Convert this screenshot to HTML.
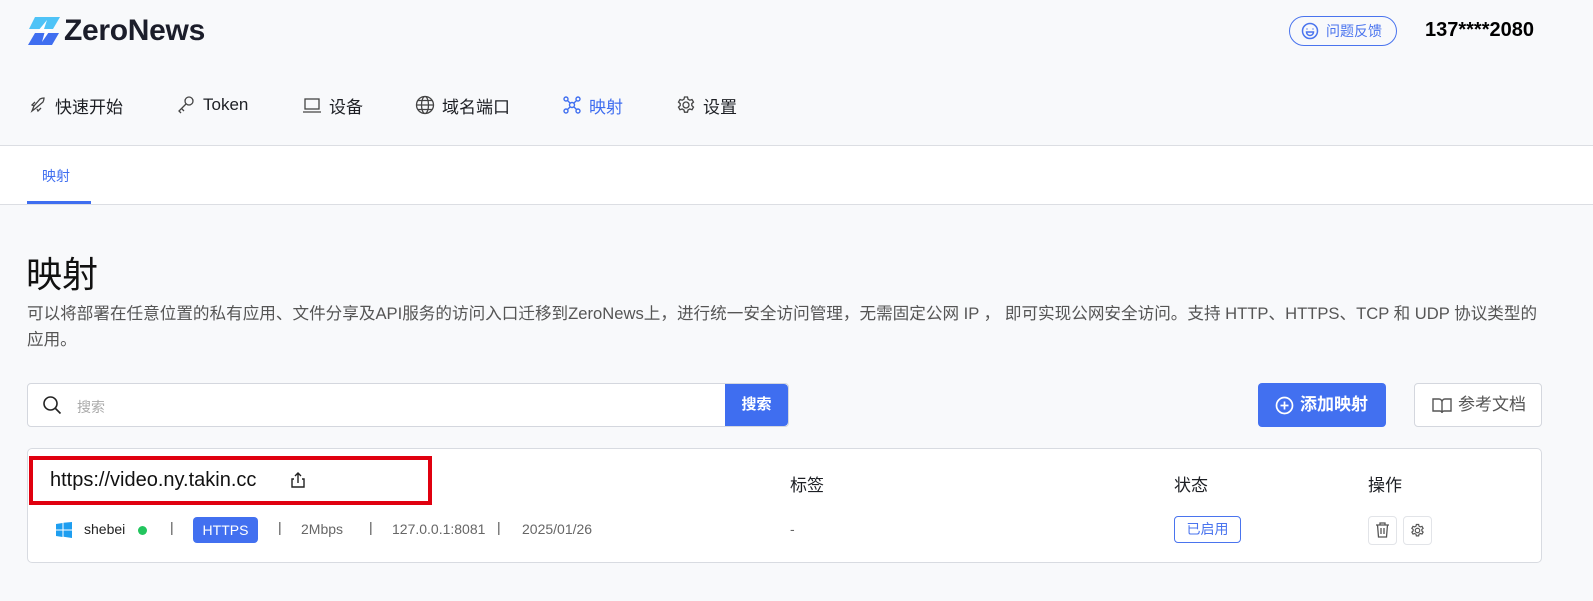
<!DOCTYPE html>
<html><head><meta charset="utf-8"><style>
*{box-sizing:border-box;margin:0;padding:0}
body{width:1593px;height:601px;background:#f8f9fb;font-family:"Liberation Sans","Noto Sans CJK SC",sans-serif;color:#1d1f24;position:relative;overflow:hidden}
.abs{position:absolute}
.nav{font-size:17px;display:flex;align-items:center;gap:7px;top:92px;height:26px}
.nav svg{width:20px;height:20px}
</style></head><body>
<div class="abs" style="left:0;top:0;width:1593px;height:146px;border-bottom:1px solid #dcdee3"></div>
<svg class="abs" style="left:26px;top:17px" width="36" height="28" viewBox="0 0 36 28"><path d="M9 0h25l-7 12H3z" fill="#4fc3f7"/><path d="M9 16h24l-7 12H2z" fill="#3f6ef0"/><path d="M21 3l-9 11h7l-3 11 9-13h-7z" fill="#fff"/></svg>
<div class="abs" style="left:64px;top:14px;font-size:30px;font-weight:bold;color:#1b1d2a;letter-spacing:-0.3px">ZeroNews</div>
<div class="abs" style="left:1289px;top:16px;width:108px;height:30px;border:1px solid #4a74ee;border-radius:15px;color:#4a74ee;font-size:14px;line-height:28px;padding-left:36px">问题反馈
<svg class="abs" style="left:11px;top:5px" width="18" height="18" viewBox="0 0 18 18" fill="none" stroke="#4a74ee" stroke-width="1.5"><circle cx="9" cy="9" r="7.5"/><path d="M6 6.5v1M12 6.5v1" /><path d="M5.5 10h7a3.5 3.5 0 0 1-7 0z"/></svg></div>
<div class="abs" style="left:1425px;top:19px;font-size:20px;font-weight:bold;color:#000">137****2080</div>

<div class="abs nav" style="left:28px"><svg viewBox="0 0 20 20" fill="none" stroke="#444" stroke-width="1.3"><path d="M4 16l2-5 6-7c2-1 4-1 4-1s0 2-1 4l-7 6zM6 11l-2-1 3-3M9 14l1 2 3-3M4 16l2-2"/></svg>快速开始</div>
<div class="abs nav" style="left:176px"><svg viewBox="0 0 20 20" fill="none" stroke="#444" stroke-width="1.3"><circle cx="13" cy="6" r="4"/><path d="M10 9l-7 7 2 2M6 14l2 2"/></svg>Token</div>
<div class="abs nav" style="left:302px"><svg viewBox="0 0 20 20" fill="none" stroke="#444" stroke-width="1.3"><rect x="3" y="4" width="14" height="10"/><path d="M1 17h18"/></svg>设备</div>
<div class="abs nav" style="left:415px"><svg viewBox="0 0 20 20" fill="none" stroke="#444" stroke-width="1.3"><circle cx="10" cy="10" r="8.5"/><ellipse cx="10" cy="10" rx="3.5" ry="8.5"/><path d="M1.5 10h17M3 5.5h14M3 14.5h14"/></svg>域名端口</div>
<div class="abs nav" style="left:562px;color:#3f6ef0"><svg viewBox="0 0 20 20" fill="none" stroke="#3f6ef0" stroke-width="1.4"><circle cx="10" cy="10" r="2.5"/><circle cx="4" cy="4" r="2"/><circle cx="16" cy="4" r="2"/><circle cx="4" cy="16" r="2"/><circle cx="16" cy="16" r="2"/><path d="M5.5 5.5l3 3M14.5 5.5l-3 3M5.5 14.5l3-3M14.5 14.5l-3-3"/></svg>映射</div>
<div class="abs nav" style="left:676px"><svg viewBox="0 0 20 20" fill="none" stroke="#444" stroke-width="1.3"><circle cx="10" cy="10" r="3"/><path d="M8.5 2h3l.5 2.2 1.8 1 2.2-.7 1.5 2.6-1.7 1.5v2l1.7 1.5-1.5 2.6-2.2-.7-1.8 1-.5 2.2h-3l-.5-2.2-1.8-1-2.2.7-1.5-2.6 1.7-1.5v-2L2.5 7.1 4 4.5l2.2.7 1.8-1z"/></svg>设置</div>

<div class="abs" style="left:0;top:146px;width:1593px;height:59px;background:#fff;border-bottom:1px solid #dcdee3"></div>
<div class="abs" style="left:42px;top:166px;font-size:14px;color:#3f6ef0">映射</div>
<div class="abs" style="left:27px;top:201px;width:64px;height:3px;background:#3f6ef0"></div>

<div class="abs" style="left:26px;top:246px;font-size:36px;color:#111">映射</div>
<div class="abs" style="left:27px;top:301px;width:1518px;font-size:16.6px;line-height:26px;color:#555">可以将部署在任意位置的私有应用、文件分享及API服务的访问入口迁移到ZeroNews上，进行统一安全访问管理，无需固定公网 IP ， 即可实现公网安全访问。支持 HTTP、HTTPS、TCP 和 UDP 协议类型的应用。</div>

<div class="abs" style="left:27px;top:383px;width:762px;height:44px;background:#fff;border:1px solid #d4d7de;border-radius:4px"></div>
<svg class="abs" style="left:42px;top:395px" width="20" height="20" viewBox="0 0 20 20" fill="none" stroke="#222" stroke-width="1.6"><circle cx="8.5" cy="8.5" r="6.5"/><path d="M13.5 13.5l5 5"/></svg>
<div class="abs" style="left:77px;top:397px;font-size:14px;color:#aaa">搜索</div>
<div class="abs" style="left:725px;top:384px;width:63px;height:42px;background:#3f6ef0;color:#fff;font-size:15px;font-weight:bold;text-align:center;line-height:42px;border-radius:0 4px 4px 0">搜索</div>

<div class="abs" style="left:1258px;top:383px;width:128px;height:44px;background:#4270f0;border-radius:4px;color:#fff;font-size:17px;font-weight:bold;line-height:44px;padding-left:42px">添加映射</div>
<svg class="abs" style="left:1275px;top:396px" width="19" height="19" viewBox="0 0 19 19" fill="none" stroke="#fff" stroke-width="1.7"><circle cx="9.5" cy="9.5" r="8"/><path d="M9.5 5.5v8M5.5 9.5h8"/></svg>
<div class="abs" style="left:1414px;top:383px;width:128px;height:44px;background:#fff;border:1px solid #d4d7de;border-radius:4px;color:#555;font-size:17px;line-height:42px;padding-left:43px">参考文档</div>
<svg class="abs" style="left:1432px;top:398px" width="20" height="16" viewBox="0 0 20 16" fill="none" stroke="#555" stroke-width="1.4"><path d="M1 1h6a3 3 0 0 1 3 3v11a2 2 0 0 0-2-2H1zM19 1h-6a3 3 0 0 0-3 3v11a2 2 0 0 1 2-2h7z"/></svg>

<div class="abs" style="left:27px;top:448px;width:1515px;height:115px;background:#fff;border:1px solid #d8dbe1;border-radius:5px"></div>
<div class="abs" style="left:29px;top:456px;width:403px;height:49px;border:4px solid #e0000f"></div>
<div class="abs" style="left:50px;top:469px;font-size:20px;color:#111">https://video.ny.takin.cc</div>
<svg class="abs" style="left:290px;top:471px" width="16" height="18" viewBox="0 0 16 18" fill="none" stroke="#222" stroke-width="1.4"><path d="M8 12V2M5 5l3-3 3 3M4 8H2v8h12V8h-2"/></svg>
<div class="abs" style="left:790px;top:471px;font-size:17px">标签</div>
<div class="abs" style="left:1174px;top:471px;font-size:17px">状态</div>
<div class="abs" style="left:1368px;top:471px;font-size:17px">操作</div>

<svg class="abs" style="left:56px;top:522px" width="16" height="16" viewBox="0 0 16 16" fill="#1e9ef0"><path d="M0 2l6.5-1v6.5H0zM7.5.8L16 0v7.5H7.5zM0 8.5h6.5V15L0 14zM7.5 8.5H16V16l-8.5-1.2z"/></svg>
<div class="abs" style="left:84px;top:521px;font-size:14px;color:#222">shebei</div>
<div class="abs" style="left:138px;top:526px;width:9px;height:9px;border-radius:50%;background:#22c55e"></div>
<div class="abs" style="left:170px;top:519px;font-size:14px;color:#555">|</div>
<div class="abs" style="left:193px;top:517px;width:65px;height:26px;background:#4270f0;color:#fff;border-radius:4px;font-size:14px;line-height:26px;text-align:center">HTTPS</div>
<div class="abs" style="left:278px;top:519px;font-size:14px;color:#555">|</div>
<div class="abs" style="left:301px;top:521px;font-size:14px;color:#666">2Mbps</div>
<div class="abs" style="left:369px;top:519px;font-size:14px;color:#555">|</div>
<div class="abs" style="left:392px;top:521px;font-size:14px;color:#666">127.0.0.1:8081</div>
<div class="abs" style="left:497px;top:519px;font-size:14px;color:#555">|</div>
<div class="abs" style="left:522px;top:521px;font-size:14px;color:#666">2025/01/26</div>
<div class="abs" style="left:790px;top:521px;font-size:14px;color:#666">-</div>
<div class="abs" style="left:1174px;top:516px;width:67px;height:27px;border:1px solid #4a74ee;border-radius:4px;color:#4a74ee;font-size:14px;line-height:25px;text-align:center">已启用</div>
<div class="abs" style="left:1368px;top:516px;width:29px;height:29px;border:1px solid #e2e4e8;border-radius:4px"></div>
<svg class="abs" style="left:1375px;top:522px" width="15" height="16" viewBox="0 0 15 16" fill="none" stroke="#555" stroke-width="1.3"><path d="M1 3h13M5 3V1h5v2M2.5 3l1 12h8l1-12M6 6v6M9 6v6"/></svg>
<div class="abs" style="left:1403px;top:516px;width:29px;height:29px;border:1px solid #e2e4e8;border-radius:4px"></div>
<svg class="abs" style="left:1410px;top:523px" width="15" height="15" viewBox="0 0 20 20" fill="none" stroke="#555" stroke-width="1.6"><circle cx="10" cy="10" r="3"/><path d="M8.5 2h3l.5 2.2 1.8 1 2.2-.7 1.5 2.6-1.7 1.5v2l1.7 1.5-1.5 2.6-2.2-.7-1.8 1-.5 2.2h-3l-.5-2.2-1.8-1-2.2.7-1.5-2.6 1.7-1.5v-2L2.5 7.1 4 4.5l2.2.7 1.8-1z"/></svg>
</body></html>
